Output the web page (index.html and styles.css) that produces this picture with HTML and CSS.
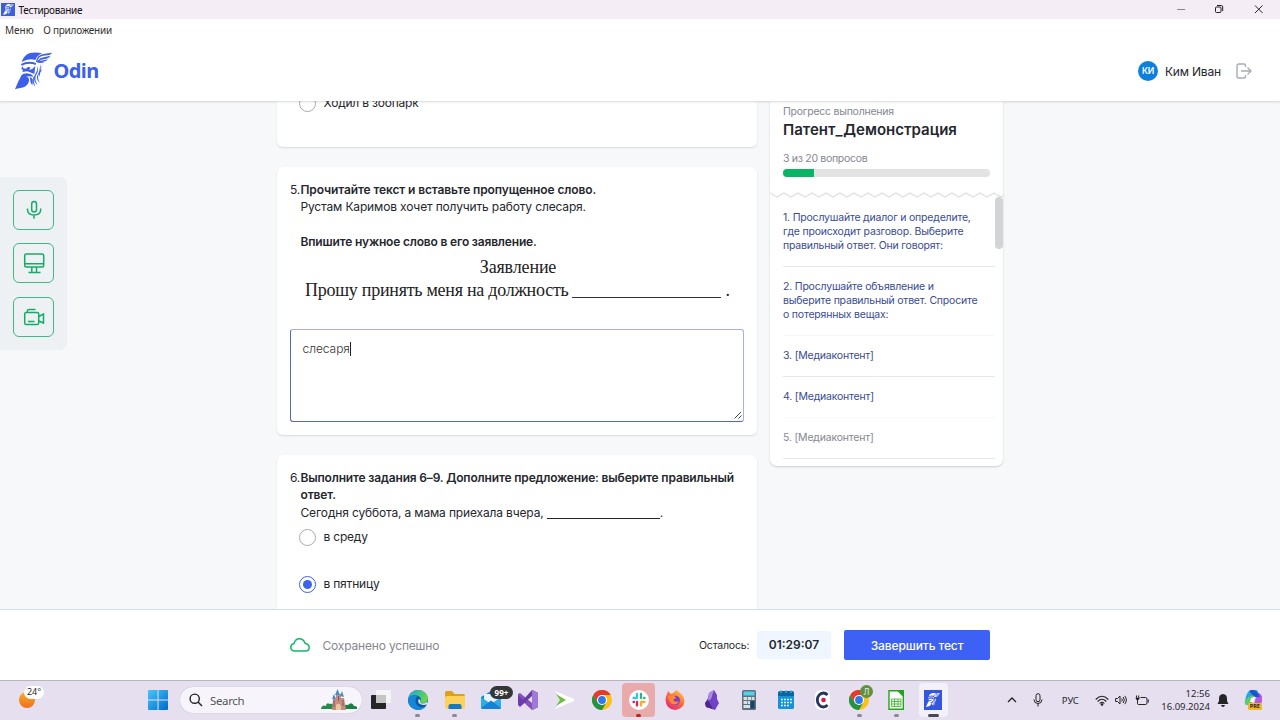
FILE: index.html
```html
<!DOCTYPE html>
<html lang="ru">
<head>
<meta charset="utf-8">
<title>Тестирование</title>
<link rel="stylesheet" href="styles.css">
</head>
<body>
<svg class="defs" width="0" height="0">
  <symbol id="odin" viewBox="45 157 111 114">
    <path d="M65 187Q72 166 90 160Q108 156 126 161Q111 167 106 181Q86 175 65 187Z"/>
    <path d="M63 193Q84 181 108 190L107 196Q85 188 65 198Z"/>
    <path d="M108 186Q110 167 130 163L156 159Q154 164 147 166L129 168Q115 171 112 184L122 175L152 168Q149 174 139 177L123 180L118 184L145 179Q139 186 127 187L118 188L134 187Q122 194 108 186Z"/>
    <path d="M67 199L64 208L69 211L67 217L82 215L103 223L106 199L97 208L87 211L92 204L84 201L78 207L70 206Z"/>
    <path d="M45 269Q53 247 65 226Q72 219 88 222Q99 225 99 231Q88 228 78 231Q91 233 86 248Q80 263 62 265Q52 266 45 269Z"/>
    <path d="M88 233Q102 232 97 257Q91 251 91 244Q91 237 88 233ZM105 227Q97 237 106 262Q98 254 98 240Q98 232 105 227ZM113 199Q117 213 108 227Q102 240 113 256Q102 248 102 235Q102 227 108 219Q113 211 113 199ZM121 192Q124 210 117 222Q110 234 120 250Q109 241 111 229Q120 215 121 192ZM127 196Q126 203 121 211L126 209Q119 220 118 232Q114 222 120 211Q124 204 127 196Z"/>
  </symbol>
  <symbol id="chrome" viewBox="0 0 20 20">
    <circle cx="10" cy="10" r="10" fill="#fbc116"/>
    <path d="M1.3 5A10 10 0 0 0 10 20L14.300 12.500L10 10L5.700 12.500Z" fill="#229342"/>
    <path d="M1.300 5A10 10 0 0 1 18.700 5H10L5.700 12.500Z" fill="#e33b2e"/>
    <circle cx="10" cy="10" r="5" fill="#fff"/><circle cx="10" cy="10" r="3.900" fill="#2f78e8"/>
  </symbol>
</svg>

<div class="titlebar">
  <span class="app-icon"><svg><use href="#odin"/></svg></span>
  <span class="app-name">Тестирование</span>
  <svg class="win-controls" viewBox="0 0 100 19" fill="none" stroke="#222"><path d="M7 9.500H15" stroke="#888"/><rect x="45.500" y="7" width="5.500" height="5.500" rx="1"/><path d="M47 5.500H51.500Q52.700 5.500 52.700 7V11"/><path d="M85 5.500L92.500 13M92.500 5.500L85 13"/></svg>
</div>
<nav class="menubar"><span class="menu-a">Меню</span><span class="menu-b">О приложении</span></nav>
<header class="header">
  <svg class="logo"><use href="#odin"/></svg>
  <span class="brand">Odin</span>
  <span class="avatar">КИ</span>
  <span class="user">Ким Иван</span>
  <svg class="logout" viewBox="0 0 16 16" fill="none" stroke="#a5aabd" stroke-width="1.400"><path d="M9.500 4V2.500Q9.500 1 8 1H3Q1 1 1 3V13Q1 15 3 15H8Q9.500 15 9.500 13.500V12M5 8H14.800M11.500 4.500L15 8L11.500 11.500"/></svg>
</header>

<main class="main">
  <div class="dock">
    <span class="dock-btn"><svg viewBox="0 0 22 22"><rect x="8.700" y="2.500" width="4.800" height="10.500" rx="2.400"/><path d="M4.500 9.500V10.500Q4.500 16 11 16Q17.700 16 17.700 10.500V9.500M11 16V19.800"/></svg></span>
    <span class="dock-btn"><svg viewBox="0 0 22 22"><rect x="1.700" y="2" width="19" height="13" rx="1.500"/><path d="M2 11.800H20.500M8.800 15V20M13.500 15V20M5.500 20.500H17.500"/></svg></span>
    <span class="dock-btn"><svg viewBox="0 0 22 22"><rect x="1.700" y="6.500" width="14" height="12" rx="1.500"/><path d="M4.300 6V5Q4.500 3.500 6 3.500H12.500M15.700 10.500L20.500 8V17L15.700 15M5 15.500H11.500"/></svg></span>
  </div>
  <section class="questions">
    <article class="card card-first">
      <div class="option"><span class="radio"></span><span class="opt-text">Ходил в зоопарк</span></div>
    </article>
    <article class="card card-text">
      <div class="question"><span class="num">5.</span>
        <div class="body">
          <p class="strong q5-a">Прочитайте текст и вставьте пропущенное слово.</p>
          <p class="q5-b">Рустам Каримов хочет получить работу слесаря.</p>
          <p>&nbsp;</p>
          <p class="strong q5-c">Впишите нужное слово в его заявление.</p>
        </div>
      </div>
      <div class="statement">
        <p class="st-title">Заявление</p>
        <p class="st-line"><span class="st-words">Прошу принять меня на должность</span><span class="st-blank"></span><span>.</span></p>
      </div>
      <div class="answer"><span class="typed">слесаря</span><span class="caret"></span>
        <svg class="grip" viewBox="0 0 8 8"><path d="M0.500 7.500L7 1M4.500 7.500L7.500 4.500" stroke="#444" fill="none"/></svg></div>
    </article>
    <article class="card card-last">
      <div class="question"><span class="num">6.</span>
        <div class="body">
          <p class="strong q6-a">Выполните задания 6–9. Дополните предложение: выберите правильный</p>
          <p class="strong q6-a">ответ.</p>
          <p class="q5-b">Сегодня суббота, а мама приехала вчера, <span class="blank"></span>.</p>
        </div>
      </div>
      <div class="option opt-1"><span class="radio"></span><span class="opt-text">в среду</span></div>
      <div class="option opt-2"><span class="radio checked"></span><span class="opt-text">в пятницу</span></div>
    </article>
  </section>
  <aside class="progress">
    <p class="pr-label">Прогресс выполнения</p>
    <h2 class="pr-title">Патент_Демонстрация</h2>
    <p class="pr-count">3 из 20 вопросов</p>
    <div class="bar"><div class="bar-fill" style="width:15%"></div></div>
    <svg class="zigzag" viewBox="0 0 234 6"><defs><pattern id="zig" width="14" height="6" patternUnits="userSpaceOnUse"><path d="M-1.750 0L0 1L7 5L14 1L15.750 0" fill="none" stroke="#dcdee1" stroke-width="1.200"/></pattern></defs><rect width="234" height="6" fill="url(#zig)"/></svg>
    <div class="list">
      <div class="item"><span>1. Прослушайте диалог и определите,</span><span>где происходит разговор. Выберите</span><span>правильный ответ. Они говорят:</span></div>
      <div class="item faint"><span>2. Прослушайте объявление и</span><span>выберите правильный ответ. Спросите</span><span>о потерянных вещах:</span></div>
      <div class="item"><span>3. [Медиаконтент]</span></div>
      <div class="item faint"><span>4. [Медиаконтент]</span></div>
      <div class="item muted"><span>5. [Медиаконтент]</span></div>
      <span class="thumb"></span>
    </div>
  </aside>
</main>

<footer class="footer">
  <svg class="cloud" viewBox="0 0 20 14"><path d="M5 13Q.8 13 .8 9.300Q.8 6.300 4 5.500Q5.500 .8 9.300 .8Q13.500 .8 15 5.200Q19.200 6 19.200 9.500Q19.200 13 15.500 13Z" fill="none" stroke="#12b76a" stroke-width="1.500"/></svg>
  <span class="saved">Сохранено успешно</span>
  <span class="left">Осталось:</span>
  <span class="timer">01:29:07</span>
  <button class="finish">Завершить тест</button>
</footer>

<div class="taskbar">
  <div class="weather"><span class="sun"></span><span class="temp">24°</span></div>
  <svg class="start" viewBox="0 0 20 20"><defs><linearGradient id="win" x1="0" y1="0" x2="1" y2="1"><stop stop-color="#45c7fa"/><stop offset="1" stop-color="#0069c9"/></linearGradient></defs><path d="M0 1Q0 0 1 0H9.500V9.500H0ZM10.500 0H19Q20 0 20 1V9.500H10.500ZM0 10.500H9.500V20H1Q0 20 0 19ZM10.500 10.500H20V19Q20 20 19 20H10.500Z" fill="url(#win)"/></svg>
  <div class="search">
    <svg class="lens" viewBox="0 0 14 14" fill="none" stroke="#222" stroke-width="1.400"><circle cx="5.700" cy="5.700" r="4.600"/><path d="M9 9L13 13"/></svg>
    <span class="search-text">Search</span>
    <svg class="castle" viewBox="0 0 36 22"><path d="M0 20Q1 15 5 17Q5 13 9 15Q13 14 14 20Z" fill="#238b4c"/><path d="M22 20Q23 15 27 16Q31 12 33 17Q37 17 36 20Z" fill="#178044"/><path d="M11 21L12 10H15V5H20V9H23L25 21Z" fill="#c68d7b"/><path d="M11 10L13 5L15 10ZM14 6L16.500 0L19 6ZM19 7L21 2L23 8Z" fill="#448dcc"/><path d="M15 21V16Q18 13 20 17V21Z" fill="#eac9a2"/><path d="M13 11V18M17.500 7V12M22 11V17" stroke="#85566a"/></svg>
  </div>
  <div class="apps">
    <span class="app"><svg viewBox="0 0 20 20"><rect x="0" y="5" width="15" height="14" rx="1" fill="#262626"/><rect x="5" y="0" width="15" height="13" rx="1" fill="#f5f5f5"/><rect x="5" y="5" width="10" height="8" fill="#c4c4c4"/></svg></span>
    <span class="app"><svg viewBox="0 0 20 20"><defs><linearGradient id="edge" x1="0" y1="0" x2="1" y2=".4"><stop stop-color="#1ca6dc"/><stop offset="1" stop-color="#63d74b"/></linearGradient></defs><circle cx="10" cy="10" r="10" fill="#0c59a4"/><path d="M0 9Q2 0 10.500 0Q19.500 1 20 8.500Q19 14 14 13.500Q11 13 12.500 11Q14 7 9 5.500Q3 4.500 0 9Z" fill="url(#edge)"/><path d="M0 9Q4 3.500 9.500 6Q5.500 10 9 15Q12 19 18 16Q14 21 8 19.800Q0 18 0 9Z" fill="#1785d8"/><path d="M12.500 11Q11 13 14 13.500Q17 13.700 19 12L20 14L19 14.500Q15 15.500 12 14Q9.500 12.500 10.500 9.500Q12 8.500 12.500 11Z" fill="#e7e3f1"/></svg><i class="dot"></i></span>
    <span class="app"><svg viewBox="0 0 20 20"><path d="M0 3Q0 1 2 1H7L9.500 4H18Q20 4 20 6V12H0Z" fill="#dda116"/><path d="M0 8Q0 6 2 6H20V17Q20 19 18 19H2Q0 19 0 17Z" fill="#ffd158"/><path d="M3.500 19V16Q3.500 14 5.500 14H14.500Q16.500 14 16.500 16V19Z" fill="#1978c2"/></svg><i class="dot"></i></span>
    <span class="app"><svg viewBox="0 0 20 20"><path d="M0 7L10 1L20 7V17Q20 19 18 19H2Q0 19 0 17Z" fill="#1683d1"/><path d="M3 4H17V14H3Z" fill="#e9f4ff"/><path d="M0 7L10 14L20 7V17Q20 19 18 19H2Q0 19 0 17Z" fill="#2eabea"/><path d="M0 18L10 10.500L20 18Q19 19 18 19H2Z" fill="#1582d5"/></svg><b class="mail-badge">99+</b></span>
    <span class="app"><svg viewBox="0 0 20 20"><path d="M14 0L20 3V17L14 20L0 7V4L2 3L14 13Z" fill="#8650bd"/><path d="M14 0L20 3V17L14 20V6L2 17L0 15V5L5 10Z" fill="#6c3caa"/><path d="M14 0L20 3V17L14 20Z" fill="#a078d5"/></svg></span>
    <span class="app"><svg viewBox="0 0 20 20"><path d="M0 1L19 9V11L0 19L6 10Z" fill="#fff"/><path d="M1 4L11 10L1 16L5 10Z" fill="#6fbe42"/></svg></span>
    <span class="app"><svg><use href="#chrome"/></svg></span>
    <span class="app slack"><svg viewBox="0 0 20 20"><circle cx="10" cy="10" r="10" fill="#fff"/><g fill="none" stroke-width="2.300" stroke-linecap="round"><path d="M8 4V8M4.500 8H8" stroke="#36c5f0"/><path d="M12 4V8M15.500 8H15" stroke="#2eb67d"/><path d="M12 12V15.500M12 12H15.500" stroke="#ecb22e"/><path d="M8 12V15.500M4.500 12H5" stroke="#e01e5a"/></g></svg><i class="dot red"></i></span>
    <span class="app"><svg viewBox="0 0 20 20"><defs><linearGradient id="fox" x1="1" y1="0" x2=".3" y2="1"><stop stop-color="#ffe04b"/><stop offset=".5" stop-color="#ff7139"/><stop offset="1" stop-color="#e72977"/></linearGradient></defs><path d="M2 4L3 1L6 4Q9 3 11 0Q19 4 19.500 11Q19 19 10 20Q1 19 .5 10Q.5 7 2 4Z" fill="url(#fox)"/><circle cx="10.200" cy="10.500" r="4.800" fill="#7b3fc4"/><path d="M3 6Q9 3 11 8L8 10Q10 13 14 11Q12 16 7 14Q4 12 3 6Z" fill="#ff873b"/></svg></span>
    <span class="app"><svg viewBox="0 0 20 20"><path d="M7 3L12 0L15 5V9L17 13L13 20L4 17L3 13L6 8Z" fill="#7143c4"/><path d="M7 3L12 0L9 9L6 11Z" fill="#a98ce4"/><path d="M3 13L6 10L11 19L4 17Z" fill="#4c278f"/></svg></span>
    <span class="app"><svg viewBox="0 0 20 20"><rect x="3" y="0" width="14" height="20" rx="1.500" fill="#60717e"/><rect x="4.500" y="1.500" width="11" height="4" fill="#52d1ef"/><path d="M4.500 7H8V10H4.500ZM8.700 7H12V10H8.700ZM12.700 7H15.500V10H12.700ZM4.500 11H8V14H4.500ZM8.700 11H11V14H8.700ZM4.500 15H11V18H4.500Z" fill="#d7e0e5"/><rect x="11.500" y="11" width="4" height="7.500" fill="#11456a"/></svg></span>
    <span class="app"><svg viewBox="0 0 20 20"><rect x="2" y="2" width="16" height="17" rx="1.500" fill="#1593d8"/><path d="M2 6V3Q2 1 4 1H16Q18 1 18 3V6Z" fill="#0f649f"/><path d="M5 0V3M10 0V3M15 0V3" stroke="#43bbe9" stroke-width="1.200"/><path d="M5 9.500H16M5 12.500H16M5 15.500H13" stroke="#fff" stroke-width="1.700" stroke-dasharray="1.800 1.200"/></svg></span>
    <span class="app"><svg viewBox="0 0 20 20"><rect x="2" y="0" width="15" height="20" rx="6" fill="#fff"/><path d="M14.500 5A6 7 0 1 0 14.500 15" fill="none" stroke="#243562" stroke-width="2.800"/><circle cx="10.500" cy="10" r="2.300" fill="#df173d"/></svg></span>
    <span class="app"><svg><use href="#chrome"/></svg><b class="green-badge">Л</b><i class="dot"></i></span>
    <span class="app"><svg viewBox="0 0 20 20"><path d="M3 .7H12L17.300 6V19.300H3Z" fill="#fff" stroke="#20a51c" stroke-width="1.400"/><path d="M11 0H18V7Z" fill="#20a51c"/><path d="M5.500 9H15V16.500H5.500ZM5.500 11.500H15M5.500 14H15M8.500 9V16.500M12 9V16.500" stroke="#41ad35" fill="#eefbe9" stroke-width=".8"/></svg><i class="dot"></i></span>
    <span class="app active"><span class="odin-tile"><svg><use href="#odin"/></svg></span><i class="dot wide"></i></span>
  </div>
  <div class="tray">
    <svg class="chev" viewBox="0 0 10 6"><path d="M1 5L5 1L9 5" fill="none" stroke="#222" stroke-width="1.300"/></svg>
    <svg class="mic" viewBox="0 0 10 14" fill="none" stroke="#222"><rect x="3" y=".7" width="4" height="8" rx="2"/><path d="M1 6.500Q1 10.500 5 10.500Q9 10.500 9 6.500M5 10.500V13.500"/></svg>
    <span class="lang">РУС</span>
    <svg class="wifi" viewBox="0 0 14 11" fill="none" stroke="#222" stroke-width="1.100"><path d="M.7 4.500Q7-2 13.300 4.500M2.700 6.500Q7 2 11.300 6.500M4.700 8.500Q7 6 9.300 8.500"/><circle cx="7" cy="9.500" r=".8" fill="#222"/></svg>
    <svg class="volume" viewBox="0 0 12 10" fill="none" stroke="#222"><path d="M.6 3.500H2.500L5 1V9L2.500 6.500H.6ZM6.700 3.500Q8 5 6.700 6.500M8.200 2Q10.500 5 8.200 8M9.700 .8Q13 5 9.700 9.200"/></svg>
    <svg class="battery" viewBox="0 0 14 11" fill="none" stroke="#222"><path d="M5.500 2.500H10.500Q12 2.500 12 4V8Q12 9.500 10.500 9.500H3.500Q2.500 9.500 2.500 8.500V5M13.300 4.500V7.500M1.500 .5V2.500M3.700 .5V2.500"/><path d="M.7 2.500H4.500V3.500Q4.300 5 2.500 5Q.8 5 .7 3.500Z" fill="#222" stroke="none"/></svg>
    <div class="clock"><span class="time">12:56</span><span class="date">16.09.2024</span></div>
    <svg class="bell" viewBox="0 0 12 13"><path d="M6 0Q2 .3 2 4.500V7L.5 10H11.500L10 7V4.500Q10 .3 6 0ZM4 11H8Q7.500 13 6 13Q4.500 13 4 11Z" fill="#252525"/></svg>
    <div class="copilot"><svg viewBox="0 0 18 18"><path d="M5 1Q6 0 8 0H12Q14 0 14 3L10 5L7 15H4Q0 15 1 11Q2 4 5 1Z" fill="#25a7df"/><path d="M1 10Q0 16 4 15H7L10 5Q5 6 1 10Z" fill="#5fc96d"/><path d="M11 3H15Q19 5 18 11Q17 17 12 17H9L12 7Z" fill="#b45ae8"/><path d="M5 1Q10-2 14 3L16 7H11Q8 5 5 1Z" fill="#1b57c9"/><path d="M7 8L11 7L9 12H6Z" fill="#fff"/></svg><b>PRE</b></div>
  </div>
</div>
</body>
</html>
```

FILE: styles.css
```css
* { box-sizing: border-box; }
body { margin: 0; width: 1280px; height: 720px; overflow: hidden; display: flex; flex-direction: column; background: #fff; font-family: Inter, "Noto Sans", sans-serif; color: #25272e; }
p, h2 { margin: 0; }
svg { display: block; }
.defs { position: absolute; }
span { white-space: nowrap; }
.titlebar { height: 19px; flex: none; background: #f5edf5; display: flex; align-items: center; font: 10px/19px "Noto Sans", sans-serif; color: #111; }
.app-icon { width: 14px; height: 13px; margin: 0 3.500px 0 1px; background: #3b5edb; fill: #fff; display: flex; align-items: center; justify-content: center; }
.app-icon svg { width: 11px; height: 11px; }
.app-name { letter-spacing: -.32px; padding-top: 1px; }
.win-controls { width: 100px; height: 19px; margin-left: auto; margin-right: 10px; }
.menubar { height: 22px; flex: none; display: flex; gap: 9.500px; padding-left: 5px; font: 10px/22px "Noto Sans", sans-serif; color: #333; }
.menu-b { letter-spacing: -.25px; }
.header { height: 60px; flex: none; display: flex; align-items: center; padding: 0 29px 0 15px; box-shadow: 0 1px 2px rgba(30,40,50,.18); position: relative; z-index: 2; background: #fff; }
.logo { width: 37px; height: 38px; fill: #3d5fee; }
.brand { font: 700 20px/26px "Noto Sans", sans-serif; letter-spacing: -.6px; color: #3d5fee; margin-left: 1.500px; }
.avatar { width: 20px; height: 20px; border-radius: 50%; background: #0a81dc; color: #fff; font-size: 8.500px; font-weight: 600; line-height: 20px; text-align: center; letter-spacing: -.2px; margin-left: auto; }
.user { width: 55px; margin-left: 7px; font-size: 12px; letter-spacing: -.2px; }
.logout { width: 16px; height: 16px; margin-left: 16px; margin-right: -1px; }
.main { height: 508px; flex: none; display: flex; align-items: flex-start; background: #f7f8fa; overflow: hidden; }
.dock { width: 67px; height: 173px; margin-top: 76px; padding: 13px; display: flex; flex-direction: column; gap: 13.300px; background: #eef1f4; border-radius: 0 7px 7px 0; }
.dock-btn { width: 41px; height: 40px; flex: none; border: 1px solid #3fb981; border-radius: 6px; display: flex; align-items: center; justify-content: center; }
.dock-btn svg { width: 22px; height: 22px; fill: none; stroke: #14ac68; stroke-width: 1.500; }
.questions { width: 480px; height: 508px; margin-left: 210px; display: flex; flex-direction: column; font-size: 12px; line-height: 17.500px; }
.card { flex: none; background: #fff; border-radius: 6px; padding: 13px; box-shadow: 0 1px 2px rgba(30,40,60,.14); }
.card-first { height: 46px; padding-top: 0; margin-bottom: 20px; border-radius: 0 0 6px 6px; }
.card-first .option { margin-top: -6.500px; }
.card-text { height: 268px; margin-bottom: 20px; padding-top: 13.500px; }
.card-last { height: 190px; padding-top: 13.500px; }
.question { display: flex; }
.num { width: 10.500px; flex: none; letter-spacing: -.2px; }
.body p { height: 17.500px; white-space: nowrap; }
.strong { font-weight: 600; }
.q5-a { letter-spacing: -.115px; }
.q5-b { letter-spacing: -.15px; }
.q5-c { letter-spacing: -.18px; }
.q6-a { letter-spacing: -.165px; }
.blank { display: inline-block; width: 113px; border-bottom: 1px solid #222; vertical-align: -2px; }
.statement { font: 18px/23px "Liberation Serif", serif; text-align: center; color: #222; margin: 5.500px 0 26.500px; }
.st-title { padding-left: 2px; letter-spacing: -.15px; }
.st-line { display: flex; padding-left: 15px; }
.st-words { letter-spacing: -.26px; }
.st-blank { width: 149px; height: 19px; margin: 0 4px; border-bottom: 1px solid #333; }
.answer { position: relative; width: 453.500px; height: 93px; border: 1px solid #5a70cf; border-color: #a4afe9 #a4afe9 #5269bb #5269bb; border-radius: 3px; padding: 10px 11.500px; display: flex; color: #333; font-weight: 300; }
.typed { letter-spacing: -.05px; }
.caret { width: 1px; height: 14px; background: #222; margin-top: 2px; }
.grip { position: absolute; right: 1px; bottom: 2px; width: 8px; height: 8px; }
.option { height: 18px; display: flex; align-items: center; padding-left: 8.500px; }
.opt-text { margin-left: 8px; position: relative; top: -.5px; letter-spacing: -.2px; }
.radio { width: 17px; height: 17px; flex: none; border: 1px solid #a6a9b7; border-radius: 50%; display: flex; align-items: center; justify-content: center; }
.checked { border: 1.500px solid #3d5fe6; }
.checked::after { content: ""; width: 9px; height: 9px; border-radius: 50%; background: #3d62ee; }
.opt-1 { margin-top: 7.500px; }
.opt-2 { margin-top: 28.500px; }
.progress { width: 233.500px; height: 365px; margin-left: 12.500px; background: #fff; border-radius: 0 0 7px 7px; box-shadow: 0 1px 2px rgba(30,40,60,.2); color: #858792; font-size: 10.500px; display: flex; flex-direction: column; }
.progress > p, .progress > h2 { padding-left: 13.500px; white-space: nowrap; }
.pr-label { line-height: 14px; margin-top: 4px; letter-spacing: -.25px; }
.pr-title { font-size: 15px; line-height: 20px; font-weight: 600; color: #25272e; margin-top: .5px; }
.pr-count { line-height: 14px; margin-top: 12.500px; letter-spacing: -.3px; }
.bar { width: 207px; height: 8px; margin: 3px 0 0 13.500px; background: #e3e3e3; border-radius: 4px; overflow: hidden; }
.bar-fill { height: 8px; background: #08b564; }
.zigzag { width: 234px; height: 6px; margin-top: 14.500px; }
.list { position: relative; padding: 0 8px 0 13.500px; line-height: 14px; color: #394b94; }
.item { display: flex; flex-direction: column; align-items: flex-start; padding: 13.500px 0 12.500px; border-bottom: 1px solid #e5e8ea; font-size: 10.500px; letter-spacing: -.2px; }
.faint { border-color: #f6f7f8; }
.muted { color: #858792; }
.thumb { position: absolute; right: 0; top: -1px; width: 8px; height: 52px; border-radius: 4px; background: #d4d4d4; }
.footer { height: 71px; flex: none; border-top: 1px solid #d4e0e2; display: flex; align-items: center; padding: 0 290px; background: #fff; }
.cloud { width: 20px; height: 14px; }
.saved { margin-left: 12.500px; font-size: 12px; color: #858792; letter-spacing: -.18px; }
.left { margin-left: auto; width: 50px; font-size: 10.500px; letter-spacing: -.2px; }
.timer { width: 74px; height: 28px; margin-left: 8px; background: #eff6ff; font-size: 12px; font-weight: 600; line-height: 28px; text-align: center; border-radius: 2px; }
.finish { width: 146px; height: 30px; margin-left: 13px; border: 0; border-radius: 2px; background: #3d61f4; color: #fff; font: 500 12px Inter, sans-serif; letter-spacing: -.1px; padding: 0; }
.taskbar { height: 40px; flex: none; display: flex; align-items: center; background: #e5dfef; border-top: 1px solid #b9b4c0; padding-bottom: 1px; font-family: "Noto Sans", sans-serif; }
.weather { width: 148px; height: 38px; position: relative; }
.sun { position: absolute; left: 19px; top: 11px; width: 16px; height: 16px; border-radius: 50%; background: linear-gradient(#f7ac2c, #ee7019); }
.temp { position: absolute; left: 24px; top: 5px; width: 20px; height: 13px; border-radius: 7px; background: #fff; font-size: 9px; line-height: 12px; text-align: center; }
.start { width: 20px; height: 20px; }
.search { width: 182px; height: 26px; margin-left: 12px; border-radius: 13px; background: #f7f5fb; box-shadow: 0 0 1px #aaa; display: flex; align-items: center; padding: 0 5px 0 9px; }
.lens { width: 14px; height: 14px; }
.search-text { margin-left: 7px; font-size: 11.500px; letter-spacing: -.35px; color: #555; }
.castle { width: 36px; height: 22px; margin-left: auto; }
.apps { display: flex; margin-left: .6px; }
.app { width: 36.800px; height: 34px; display: flex; align-items: center; justify-content: center; position: relative; }
.app > svg { width: 20px; height: 20px; }
.dot { position: absolute; bottom: 0; left: 16px; width: 5px; height: 3px; border-radius: 2px; background: #8c8893; }
.red { background: #b9271d; }
.wide { width: 11px; left: 13px; background: #484650; }
.slack::before, .active::before { content: ""; position: absolute; left: 2px; top: 0; width: 33px; height: 34px; border-radius: 4px; background: #e8aaab; }
.active::before { left: 4px; width: 29px; background: #f4f0fa; }
.slack svg, .active .odin-tile { position: relative; }
.mail-badge { position: absolute; left: 17px; top: 3px; width: 23px; height: 13px; border-radius: 7px; background: #363639; color: #fff; font-size: 8px; line-height: 13px; text-align: center; }
.green-badge { position: absolute; left: 19px; top: 2px; width: 13px; height: 13px; border-radius: 50%; background: #60913e; color: #eee; font-size: 8px; font-weight: 400; line-height: 13px; text-align: center; }
.odin-tile { width: 18px; height: 20px; background: #3556df; display: flex; align-items: center; justify-content: center; fill: #fff; }
.odin-tile svg { width: 14px; height: 16px; }
.tray { flex: 1; height: 38px; display: flex; align-items: center; padding-left: 55.500px; color: #292831; }
.chev { width: 10px; height: 6px; }
.mic { width: 10px; height: 14px; margin-left: 16.500px; }
.lang { width: 18px; margin-left: 18.500px; font-size: 9.500px; }
.wifi { width: 14px; height: 11px; margin-left: 15px; }
.volume { width: 12px; height: 10px; margin-left: 6px; }
.battery { width: 14px; height: 11px; margin-left: 8px; }
.clock { width: 49px; margin-left: 12px; display: flex; flex-direction: column; align-items: flex-end; font-size: 9.500px; line-height: 13px; }
.bell { width: 12px; height: 13px; margin-left: 7px; }
.copilot { position: relative; margin-left: 15px; width: 18px; height: 20px; }
.copilot svg { width: 18px; height: 18px; }
.copilot b { position: absolute; left: 4px; bottom: 0; width: 14px; height: 7px; background: #efb92c; color: #322; font-size: 5.500px; line-height: 7px; text-align: center; border-radius: 1px; }
```
